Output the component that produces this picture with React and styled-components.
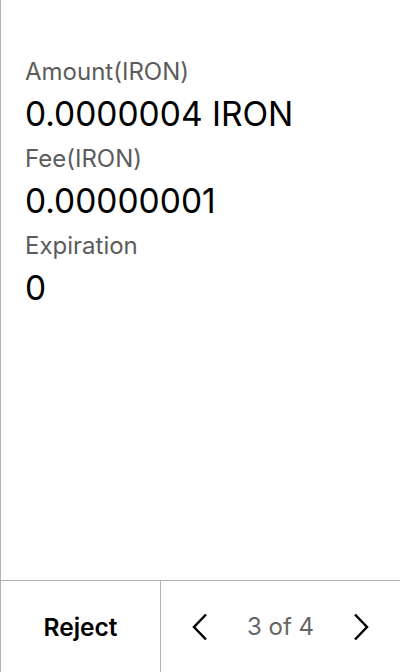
import React from 'react';
import styled, {createGlobalStyle} from 'styled-components';

const Global = createGlobalStyle`
    html, body {
        margin: 0;
        padding: 0;
        background: #ffffff;
    }
    #root {
        height: 672px;
    }
`;

const Screen = styled.main`
    height: 672px;
    display: flex;
    flex-direction: column;
    border-left: 1px solid #b3b3b3;
    box-sizing: border-box;
    font-family: Inter, "Noto Sans", sans-serif;
`;

const Details = styled.section`
    flex: 1;
    padding: 58px 24px 0 24px;
    display: flex;
    flex-direction: column;
`;

const Label = styled.div`
    font-size: 24px;
    line-height: 28px;
    color: #5c5c5c;
`;

const Value = styled.div`
    font-size: 33.5px;
    line-height: 40px;
    color: #000;
    margin: 8px 0 11px;
`;

const Footer = styled.footer`
    height: 92px;
    display: flex;
    border-top: 1px solid #b3b3b3;
    box-sizing: border-box;
`;

const RejectButton = styled.button`
    width: 160px;
    border: none;
    border-right: 1px solid #b3b3b3;
    background: none;
    font-family: Inter, "Noto Sans", sans-serif;
    font-weight: 600;
    font-size: 24.5px;
    color: #000;
    padding: 0;
`;

const Pager = styled.div`
    flex: 1;
    display: flex;
    align-items: center;
    justify-content: space-between;
    padding: 0 30px 0 30px;
`;

const Arrow = styled.button`
    border: none;
    background: none;
    padding: 0;
    display: flex;
`;

const Count = styled.span`
    font-size: 24px;
    color: #666;
`;

const fields = [
    {label: 'Amount(IRON)', value: '0.0000004 IRON'},
    {label: 'Fee(IRON)', value: '0.00000001'},
    {label: 'Expiration', value: '0'},
];

const Chevron = ({dir}) => (
    <svg width="18" height="28" viewBox="0 0 18 28" fill="none">
        <path
            d={dir === 'left' ? 'M15 1.5 L3 14 L15 26.5' : 'M3 1.5 L15 14 L3 26.5'}
            stroke="#000"
            strokeWidth="2.5"
        />
    </svg>
);

export default function App() {
    return (
        <Screen>
            <Global />
            <Details>
                {fields.map(f => (
                    <React.Fragment key={f.label}>
                        <Label>{f.label}</Label>
                        <Value>{f.value}</Value>
                    </React.Fragment>
                ))}
            </Details>
            <Footer>
                <RejectButton>Reject</RejectButton>
                <Pager>
                    <Arrow><Chevron dir="left" /></Arrow>
                    <Count>3 of 4</Count>
                    <Arrow><Chevron dir="right" /></Arrow>
                </Pager>
            </Footer>
        </Screen>
    );
}
